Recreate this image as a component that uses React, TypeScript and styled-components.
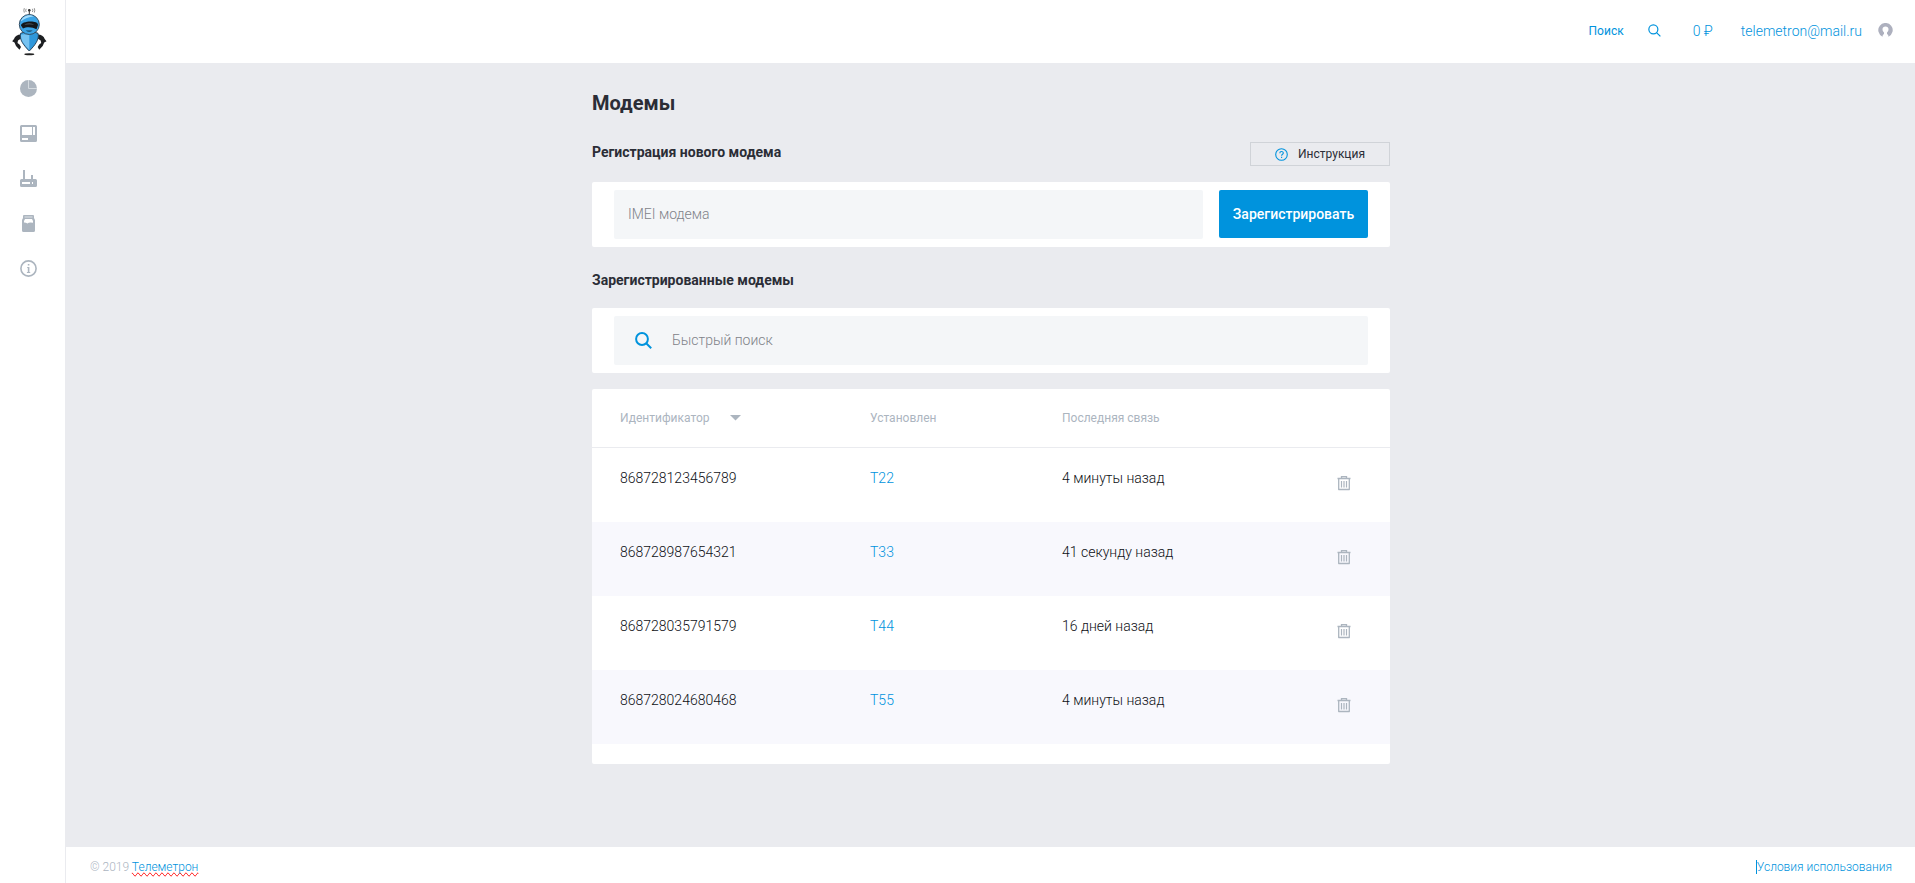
import React from "react";
import styled, { createGlobalStyle } from "styled-components";

const BLUE = "#0093dd";
const MUTED = "#acb5bf";
const INK = "#2b2d36";

const GlobalStyle = createGlobalStyle`
  *, *::before, *::after { box-sizing: border-box; }
  body {
    margin: 0;
    background: #fff;
    color: ${INK};
    font-family: Roboto, "Liberation Sans", sans-serif;
    font-size: 14px;
    line-height: 20px;
    font-weight: 300;
  }
  button, input { font: inherit; }
  a { color: ${BLUE}; text-decoration: none; }
`;

const Shell = styled.div`
  display: flex;
  min-height: 100vh;
`;

const Sidebar = styled.aside`
  flex: none;
  width: 66px;
  border-right: 1px solid #eaebef;
  background: #fff;
`;

const LogoLink = styled.a`
  display: block;
  padding: 7px 0 0 11px;
  height: 80px;
`;

const SideNav = styled.nav`
  display: flex;
  flex-direction: column;
  gap: 28px;
  padding-left: 20px;
`;

const SideLink = styled.a`
  display: block;
  width: 17px;
  height: 17px;
  color: ${MUTED};
  svg { display: block; }
`;

const Page = styled.div`
  flex: 1;
  min-width: 0;
  display: flex;
  flex-direction: column;
`;

const TopBar = styled.header`
  display: flex;
  align-items: center;
  justify-content: flex-end;
  height: 63px;
  padding: 0 22px 2px 0;
  background: #fff;
`;

const SearchLink = styled.a`
  display: flex;
  align-items: center;
  gap: 24px;
  margin-right: 32px;
  font-size: 12px;
  font-weight: 400;
`;

const Account = styled.div`
  display: flex;
  align-items: center;
  gap: 28px;
  margin-right: 16px;
`;

const Main = styled.main`
  flex: 1;
  padding: 26px 16px 80px 17px;
  background: #eaebef;
`;

const Content = styled.div`
  max-width: 798px;
  margin: 0 auto;
`;

const Title = styled.h1`
  margin: 0 0 23px;
  font-size: 20px;
  line-height: 28px;
  font-weight: 700;
`;

const SectionTitle = styled.h2`
  margin: 0;
  font-size: 14px;
  line-height: 24px;
  font-weight: 700;
`;

const SectionHead = styled.div`
  display: flex;
  justify-content: space-between;
  margin-bottom: 16px;
`;

const HelpButton = styled.button`
  display: flex;
  align-items: center;
  justify-content: center;
  gap: 10px;
  width: 140px;
  height: 24px;
  margin-top: 2px;
  padding: 0;
  border: 1px solid #d0d3d8;
  background: transparent;
  color: ${INK};
  font-size: 12px;
  font-weight: 400;
  svg { color: ${BLUE}; }
`;

const Card = styled.section`
  border-radius: 2px;
  background: #fff;
`;

const FormCard = styled.form<{ $gap: number }>`
  display: flex;
  gap: 16px;
  padding: 8px 22px;
  margin-bottom: ${(p) => p.$gap}px;
  border-radius: 2px;
  background: #fff;
`;

const Field = styled.label<{ $inset: number }>`
  flex: 1;
  display: flex;
  align-items: center;
  gap: 20px;
  height: 49px;
  padding: 0 ${(p) => p.$inset}px;
  border-radius: 2px;
  background: #f4f6f8;
  color: ${BLUE};
`;

const TextInput = styled.input`
  flex: 1;
  min-width: 0;
  height: 100%;
  padding: 0 0 2px;
  border: 0;
  outline: 0;
  background: transparent;
  color: ${INK};
  &::placeholder { color: #808288; opacity: 1; }
`;

const PrimaryButton = styled.button`
  width: 149px;
  height: 48px;
  padding: 0;
  border: 0;
  border-radius: 2px;
  background: ${BLUE};
  color: #fff;
  font-weight: 500;
`;

const TableCard = styled(Card)`
  padding-bottom: 20px;
`;

const Table = styled.table`
  width: 100%;
  table-layout: fixed;
  border-collapse: separate;
  border-spacing: 0;
`;

const HeadCell = styled.th<{ $width?: string }>`
  width: ${(p) => p.$width ?? "auto"};
  height: 59px;
  padding: 0;
  border-bottom: 1px solid #eaebef;
  color: ${MUTED};
  font-size: 12px;
  font-weight: 400;
  text-align: left;
  &:first-child { padding-left: 28px; }
`;

const SortButton = styled.button`
  display: flex;
  align-items: center;
  gap: 20px;
  padding: 0;
  border: 0;
  background: transparent;
  color: inherit;
`;

const Row = styled.tr`
  color: #0e1015;
  &:nth-child(even) { background: #f8f8fd; }
`;

const Cell = styled.td`
  height: 74px;
  padding: 20px 0 0;
  vertical-align: top;
  &:first-child { padding-left: 28px; }
`;

const IconButton = styled.button`
  display: block;
  margin-top: 8px;
  padding: 0;
  border: 0;
  background: transparent;
  color: ${MUTED};
  svg { display: block; }
`;

const Footer = styled.footer`
  display: flex;
  align-items: center;
  justify-content: space-between;
  padding: 10px 23px 6px 24px;
  background: #fff;
  color: ${MUTED};
  font-size: 12px;
`;

const BrandLink = styled.a`
  text-decoration-line: spelling-error;
`;

const TermsLink = styled.a`
  border-left: 1px solid ${BLUE};
  line-height: 14px;
`;

const Logo = () => (
  <svg width="37" height="50" viewBox="11 7 37 50" aria-hidden="true">
    <ellipse cx="29.300" cy="54.200" rx="5" ry="1" fill="#222" />
    <path d="M29.300 15V9.500" stroke="#333" strokeWidth="1" />
    <circle cx="29.300" cy="10.300" r="1.300" fill="#333" />
    <path d="M26.200 8.800q-1 1.600 0 3.200M32.400 8.800q1 1.600 0 3.200M24.300 8.200q-.9 2 0 4.400M34.300 8.200q.9 2 0 4.400" fill="none" stroke="#777" strokeWidth=".8" />
    <path d="M21 34.500q-5.500 0-7 4.500l-1.800 2.200 2.300 1.300 1.500 3.500 3.500 3.700 1.500-2.700-1.500-2.500-2-1.500.5-2.500 3-2z" fill="#1d1f22" />
    <path d="M37.700 34.500q5.500 0 7 4.500l1.800 2.200-2.300 1.300-1.500 3.500-3.500 3.700-1.500-2.700 1.500-2.500 2-1.500-.5-2.500-3-2z" fill="#1d1f22" />
    <path d="M20.600 33.300q8.700-3.600 17.400 0c1.800 6-3.500 12.500-8.700 17.700-5.200-5.200-10.500-11.700-8.700-17.700z" fill="#2f97db" stroke="#29435a" strokeWidth="1" />
    <path d="M29.300 34v16c-5-5-9-10-8.200-15.500z" fill="#77c3f2" />
    <circle cx="29.300" cy="24.500" r="10" fill="#3ba4e6" stroke="#345066" strokeWidth="1" />
    <path d="M20.800 21.500c1.500-5.500 8.500-8 13-4.900-5 .2-9.500 2-13 4.900z" fill="#a5dcfb" />
    <path d="M21 25.500c-.6-4.700 17.500-6 17-.5l-1.500 4.300c-4-2.600-10-2.800-13.500-.8z" fill="#14171a" />
    <path d="M24 24.500q5-2 10.300 0-5-.5-10.300 0z" fill="#68717a" />
    <path d="M25.700 30.500h7q-3.400 2.600-7 0z" fill="#17415f" />
  </svg>
);

const SideIcon = ({ children }: { children: React.ReactNode }) => (
  <svg width="17" height="17" viewBox="0 0 17 17" fill="currentColor" aria-hidden="true">
    {children}
  </svg>
);

const ReportsIcon = () => (
  <SideIcon>
    <circle cx="8.500" cy="8.500" r="8.500" />
    <path d="M8.500 0v8.500H17" fill="none" stroke="#d5dbe0" strokeWidth="1" />
  </SideIcon>
);

const MachinesIcon = () => (
  <SideIcon>
    <path fillRule="evenodd" d="M1.500 0h14A1.500 1.500 0 0 1 17 1.500v14a1.500 1.500 0 0 1-1.500 1.500h-14A1.500 1.500 0 0 1 0 15.500v-14A1.500 1.500 0 0 1 1.500 0zM2 2v8h10V2zM13 2v8h2V2zM2 13v2h6v-2z" />
  </SideIcon>
);

const ModemsIcon = () => (
  <SideIcon>
    <path fillRule="evenodd" d="M3 0h2v9h6V5h2v4h2.500A1.500 1.500 0 0 1 17 10.500v5a1.500 1.500 0 0 1-1.500 1.500h-14A1.500 1.500 0 0 1 0 15.500v-5A1.500 1.500 0 0 1 1.500 9H3zM2 12v2h8v-2zM12 12v2h1v-2z" />
  </SideIcon>
);

const ProductsIcon = () => (
  <SideIcon>
    <path fillRule="evenodd" d="M4 0h9a1 1 0 0 1 1 1v2l1 2v10.500a1.500 1.500 0 0 1-1.500 1.500h-10A1.500 1.500 0 0 1 2 15.500V5l1-2V1a1 1 0 0 1 1-1zM5 4L4 6v1.500q2 0 3.500 1 1.500-1.500 5.500-.7V6l-1-2z" />
    <path d="M4.500 2h8" stroke="#dfe4e8" strokeWidth="1" />
  </SideIcon>
);

const InfoIcon = () => (
  <SideIcon>
    <circle cx="8.500" cy="8.500" r="7.600" fill="none" stroke="currentColor" strokeWidth="1.600" />
    <path d="M7.800 4h1.600v1.600H7.800zM7.200 7h2.200v5h.8v1H6.900v-1h.9V8h-.6z" />
  </SideIcon>
);

const SearchIcon = ({ size, weight }: { size: number; weight: number }) => (
  <svg width={size} height={size} viewBox="0 0 17 17" fill="none" stroke="currentColor" strokeWidth={weight} aria-hidden="true">
    <circle cx="7" cy="7" r="5.900" />
    <path d="M11.200 11.200l5 5" />
  </svg>
);

const AvatarIcon = () => (
  <svg width="15" height="15" viewBox="0 0 15 15" aria-hidden="true">
    <path d="M4.500 13.700A7.200 7.200 0 1 1 10.500 13.700L10.200 12 9 11V9.500c1-.8 1.500-2 1.500-3.200C10.500 4.500 9.300 3.500 7.500 3.500S4.500 4.500 4.500 6.300C4.500 7.500 5 8.700 6 9.500V11l-1.200 1z" fill="#adb0be" />
  </svg>
);

const HelpIcon = () => (
  <svg width="13" height="13" viewBox="0 0 13 13" fill="none" stroke="currentColor" aria-hidden="true">
    <circle cx="6.500" cy="6.500" r="5.800" strokeWidth="1.100" />
    <path d="M4.800 5.200c0-2.300 3.500-2.200 3.500-.2 0 1.300-1.700 1.300-1.700 2.700M6.600 8.700v1.200" strokeWidth="1.100" />
  </svg>
);

const SortIcon = () => (
  <svg width="11" height="6" viewBox="0 0 11 6" fill="currentColor" aria-hidden="true">
    <path d="M0 0h11L5.500 5.500z" />
  </svg>
);

const TrashIcon = () => (
  <svg width="14" height="15" viewBox="0 0 14 15" fill="none" stroke="currentColor" aria-hidden="true">
    <path d="M.5 2.500h13M4.500 2.500V.700h5v1.800" strokeWidth="1.300" />
    <path d="M1.700 3v10.500h10.600V3" strokeWidth="1.300" strokeLinejoin="round" />
    <path d="M4.500 5v6.500M7 5v6.500M9.500 5v6.500" strokeWidth="1.200" />
  </svg>
);

const sections = [
  { label: "Отчёты", Icon: ReportsIcon },
  { label: "Автоматы", Icon: MachinesIcon },
  { label: "Модемы", Icon: ModemsIcon },
  { label: "Товары", Icon: ProductsIcon },
  { label: "Информация", Icon: InfoIcon },
];

const modems = [
  { imei: "868728123456789", machine: "T22", lastSeen: "4 минуты назад" },
  { imei: "868728987654321", machine: "T33", lastSeen: "41 секунду назад" },
  { imei: "868728035791579", machine: "T44", lastSeen: "16 дней назад" },
  { imei: "868728024680468", machine: "T55", lastSeen: "4 минуты назад" },
];

export default function App() {
  return (
    <>
      <GlobalStyle />
      <Shell>
        <Sidebar>
          <LogoLink href="#" aria-label="Телеметрон">
            <Logo />
          </LogoLink>
          <SideNav>
            {sections.map(({ label, Icon }) => (
              <SideLink key={label} href="#" aria-label={label}>
                <Icon />
              </SideLink>
            ))}
          </SideNav>
        </Sidebar>
        <Page>
          <TopBar>
            <SearchLink href="#">
              Поиск
              <SearchIcon size={13} weight={1.6} />
            </SearchLink>
            <Account>
              <a href="#">0 ₽</a>
              <a href="#">telemetron@mail.ru</a>
            </Account>
            <AvatarIcon />
          </TopBar>
          <Main>
            <Content>
              <Title>Модемы</Title>
              <SectionHead>
                <SectionTitle>Регистрация нового модема</SectionTitle>
                <HelpButton type="button">
                  <HelpIcon />
                  Инструкция
                </HelpButton>
              </SectionHead>
              <FormCard $gap={21}>
                <Field $inset={14}>
                  <TextInput type="text" placeholder="IMEI модема" aria-label="IMEI модема" />
                </Field>
                <PrimaryButton type="button">Зарегистрировать</PrimaryButton>
              </FormCard>
              <SectionHead>
                <SectionTitle>Зарегистрированные модемы</SectionTitle>
              </SectionHead>
              <FormCard $gap={16}>
                <Field $inset={21}>
                  <SearchIcon size={17} weight={2} />
                  <TextInput type="text" placeholder="Быстрый поиск" aria-label="Быстрый поиск" />
                </Field>
              </FormCard>
              <TableCard>
                <Table>
                  <thead>
                    <tr>
                      <HeadCell $width="278px">
                        <SortButton type="button">
                          Идентификатор
                          <SortIcon />
                        </SortButton>
                      </HeadCell>
                      <HeadCell $width="192px">Установлен</HeadCell>
                      <HeadCell>Последняя связь</HeadCell>
                      <HeadCell $width="53px" aria-label="Действия" />
                    </tr>
                  </thead>
                  <tbody>
                    {modems.map((modem) => (
                      <Row key={modem.imei}>
                        <Cell>{modem.imei}</Cell>
                        <Cell>
                          <a href="#">{modem.machine}</a>
                        </Cell>
                        <Cell>{modem.lastSeen}</Cell>
                        <Cell>
                          <IconButton type="button" aria-label="Удалить модем">
                            <TrashIcon />
                          </IconButton>
                        </Cell>
                      </Row>
                    ))}
                  </tbody>
                </Table>
              </TableCard>
            </Content>
          </Main>
          <Footer>
            <span>
              © 2019 <BrandLink href="#">Телеметрон</BrandLink>
            </span>
            <TermsLink href="#">Условия использования</TermsLink>
          </Footer>
        </Page>
      </Shell>
    </>
  );
}
